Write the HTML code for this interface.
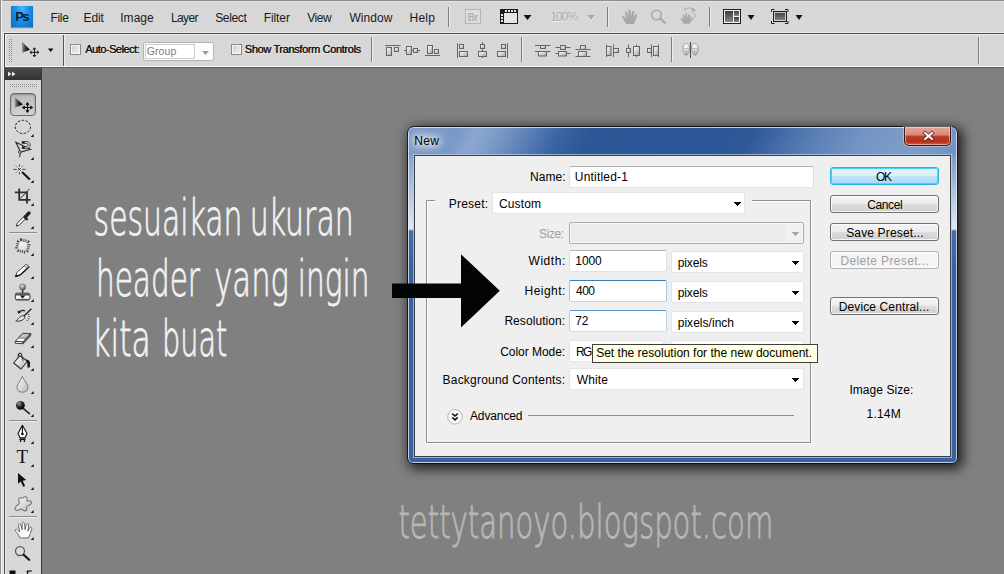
<!DOCTYPE html>
<html lang="id">
<head>
<meta charset="utf-8">
<title>New - Photoshop</title>
<style>
*{box-sizing:border-box;margin:0;padding:0}
html,body{width:1004px;height:574px;overflow:hidden}
body{position:relative;background:#808080;font-family:"Liberation Sans",sans-serif;font-size:12px;color:#000}
.a{position:absolute}
.t{position:absolute;white-space:nowrap;line-height:1;font-family:"Liberation Sans",sans-serif}
svg{position:absolute;left:0;top:0;overflow:visible}
/* app chrome */
#edgeL0{left:0;top:0;width:1px;height:574px;background:#8e8e8e}
#edgeL1{left:1px;top:0;width:1px;height:574px;background:#f4f4f4}
#edgeL2{left:2px;top:33px;width:2px;height:541px;background:#d7d7d7}
#edgeL3{left:3px;top:32px;width:1px;height:542px;background:#efefef}
#menubar{left:2px;top:0;width:1002px;height:33px;background:#d7d7d7;border-top:1px solid #8e8e8e;box-shadow:inset 0 1px 0 #e4e4e4}
#menuHi{left:3px;top:32px;width:1001px;height:1px;background:#efefef}
#optbar{left:4px;top:33px;width:1000px;height:35px;background:#d7d7d7;border-top:1px solid #454545;border-left:1px solid #454545;border-bottom:1px solid #5c5c5c;box-shadow:inset 1px 1px 0 #f2f2f2,inset 0 -1px 0 #f6f6f6}
.vsep{position:absolute;width:2px;border-left:1px solid #7e7e7e;border-right:1px solid #ececec}
.cb{position:absolute;width:11px;height:11px;border:1px solid #8a8a8a;background:linear-gradient(135deg,#cfcfcf 0%,#f4f4f4 100%);box-shadow:inset 0 0 0 1px #f6f6f6}
#grp{left:143px;top:42px;width:71px;height:19px;background:#fcfcfc;border:1px solid #b2b2b2;border-radius:2.5px}
#grpIn{left:145px;top:44px;width:50px;height:15px;border:1px solid #cdcdcd;background:#fff}
#ps{left:11px;top:6px;width:22px;height:21px;background:radial-gradient(ellipse at 50% 10%,#4fb4ff 0%,#1b8fea 45%,#0a6cc4 100%);box-shadow:0 1px 1px rgba(0,0,0,.35)}
/* toolbar */
#tbHead{left:5px;top:68px;width:36px;height:12px;background:linear-gradient(#4a4a4a,#333)}
#tb{left:5px;top:80px;width:36px;height:494px;background:#d7d7d7;box-shadow:inset 1px 0 0 #ececec}
#tbR{left:41px;top:68px;width:1px;height:506px;background:#3c3c3c}
#tbL{left:4px;top:68px;width:1px;height:506px;background:#454545}
#toolSel{left:10px;top:93px;width:26px;height:23px;border:1px solid #6a6a6a;border-radius:4px;background:linear-gradient(#bcbcbc,#d2d2d2);box-shadow:inset 0 1px 2px rgba(0,0,0,.25)}
.tsep{position:absolute;left:9px;width:28px;height:2px;border-top:1px solid #8c8c8c;border-bottom:1px solid #ececec}
/* dialog */
#dlg{left:407px;top:126px;width:551px;height:338px;border:1px solid #141414;border-radius:7px 7px 6px 6px;
 background:linear-gradient(180deg,rgba(234,240,248,0) 0,rgba(234,240,248,0) 24px,rgba(234,240,248,.12) 30px,rgba(234,240,248,.92) 102px,#486eaa 104px,#3a62a3 138px,#3a62a3 100%),linear-gradient(90deg,#7b99c6 0%,#7f9dc9 10%,#7c9bc7 15%,#5d81b7 20%,#3a64a3 26%,#2d5898 31%,#2b5596 53%,#31599a 60%,#5a7eb5 71%,#7495c4 80%,#7c9bc8 89%,#6f90c1 100%);
 box-shadow:inset 0 0 0 1px rgba(235,242,252,.75),3px 3px 12px 2px rgba(0,0,0,.74)}
#dlgTitle{left:409px;top:128px;width:547px;height:27px;border-radius:5px 5px 0 0;
 background:linear-gradient(118deg,#7d9bc8 0px,#7b99c6 45px,#8ba7d0 62px,#7c9bc7 80px,#5d81b7 107px,#3a64a3 135px,#2d5898 162px,#2b5596 270px,#31599a 307px,#5a7eb5 361px,#7495c4 406px,#7d9cc9 452px,#6f90c1 505px)}
#client{left:414px;top:155px;width:537px;height:302px;background:#efefef;border:1px solid #3b3f48;box-shadow:0 0 0 1px rgba(190,208,232,.7)}
.inp{position:absolute;background:#fff;border:1px solid #e4e4e4;border-radius:2px}
.tx{border-color:#b4b4b4 #dedede #e2e2e2 #dedede}
.btn{position:absolute;left:830px;width:109px;height:18px;border:1px solid #707070;border-radius:3px;background:linear-gradient(#f4f4f4 0%,#ececec 48%,#dddddd 52%,#cfcfcf 100%);box-shadow:inset 0 0 0 1px rgba(255,255,255,.8)}
.arr{position:absolute;width:7.4px;height:3.7px;background:#000;clip-path:polygon(0 0,100% 0,50% 100%)}
#tip{left:592px;top:344px;width:226px;height:19px;background:#ffffe1;border:1px solid #3f3f3f}
.hw{font-family:"DejaVu Sans Light","DejaVu Sans","Liberation Sans",sans-serif;font-weight:200}
</style>
</head>
<body>
<div class="a" id="menubar"></div>
<div class="a" id="menuHi"></div>
<div class="a" id="optbar"></div>
<div class="a" id="edgeL0"></div><div class="a" id="edgeL1"></div><div class="a" id="edgeL2"></div><div class="a" id="edgeL3"></div>
<div class="a" id="ps"></div>
<div class="vsep" style="left:448px;top:7px;height:20px"></div>
<div class="vsep" style="left:607px;top:7px;height:20px"></div>
<div class="vsep" style="left:709px;top:7px;height:20px"></div>
<div class="vsep" style="left:63px;top:35px;height:31px;border-left-color:#555"></div>
<div class="vsep" style="left:371px;top:37px;height:25px"></div>
<div class="vsep" style="left:521px;top:37px;height:25px"></div>
<div class="vsep" style="left:671px;top:37px;height:25px"></div>
<div class="vsep" style="left:978px;top:37px;height:27px"></div>
<div class="cb" style="left:70px;top:44px"></div>
<div class="cb" style="left:231px;top:44px"></div>
<div class="a" id="grp"></div><div class="a" id="grpIn"></div>
<svg width="1004" height="70" viewBox="0 0 1004 70">
 <defs>
  <linearGradient id="gI" x1="0" y1="0" x2="1" y2="1"><stop offset="0" stop-color="#fbfbfb"/><stop offset=".45" stop-color="#dadada"/><stop offset="1" stop-color="#9a9a9a"/></linearGradient>
  <linearGradient id="gD" x1="0" y1="0" x2="0" y2="1"><stop offset="0" stop-color="#3a3a3a"/><stop offset="1" stop-color="#8a8a8a"/></linearGradient>
 </defs>
 <!-- gripper -->
 <path d="M9.5 39 v23 M11.5 39 v23" stroke="#8a8a8a" stroke-width="1" stroke-dasharray="1 1" fill="none"/>
 <!-- move tool in options bar -->
 <g id="mv">
  <linearGradient id="gMv" x1="0" y1="0" x2="1" y2="0"><stop offset="0" stop-color="#9a9a9a"/><stop offset="0.45" stop-color="#333"/><stop offset="1" stop-color="#000"/></linearGradient>
  <path d="M22 41.8 L22.1 52.8 L30 49.7 Z" fill="url(#gMv)"/>
  <path d="M34.4 47.9 v8.8 M30 52.3 h8.8 M33 49.6 l1.4 -1.8 l1.4 1.8 M33 55 l1.4 1.8 l1.4 -1.8 M31.7 50.9 l-1.8 1.4 l1.8 1.4 M37.1 50.9 l1.8 1.4 l-1.8 1.4" stroke="#111" stroke-width="1" fill="none"/>
 </g>
 <path d="M47.9 48.6 h5.6 l-2.8 3.4 z" fill="#111"/>
 <!-- group dropdown arrow -->
 <path d="M202.1 51.1 h6.9 l-3.45 3.8 z" fill="#9c9c9c"/>
 <!-- Br box -->
 <rect x="465.5" y="9.5" width="15" height="14" fill="#dedede" stroke="#b4b4b4"/>
 <!-- film icon -->
 <g>
  <rect x="500" y="9" width="18" height="15" fill="#e6e6e6"/>
  <rect x="500" y="9" width="18" height="4" fill="#1a1a1a"/>
  <rect x="500" y="9" width="4" height="15" fill="#1a1a1a"/>
  <rect x="500.5" y="9.5" width="17" height="14" fill="none" stroke="#1a1a1a"/>
  <g fill="#e6e6e6"><rect x="505" y="10" width="2" height="2"/><rect x="508" y="10" width="2" height="2"/><rect x="511" y="10" width="2" height="2"/><rect x="514" y="10" width="2" height="2"/><rect x="501" y="14" width="2" height="2"/><rect x="501" y="17" width="2" height="2"/><rect x="501" y="20" width="2" height="2"/></g>
 </g>
 <path d="M523.5 15 h8 l-4 5 z" fill="#111"/>
 <path d="M587 16 h8 l-4 5 z" fill="#f2f2f2"/>
 <path d="M587 15 h8 l-4 5 z" fill="#aaa"/>
 <!-- hand (disabled) -->
 <g fill="#a9a9a9" stroke="none">
  <path d="M626 24 c-1 -2.5 -2.6 -4.6 -3.8 -6.3 c-.7 -1.2 .8 -2.2 1.8 -1.2 l2 2.2 l-.9 -6.2 c-.2 -1.5 1.7 -1.8 2.1 -.4 l1 4.4 l.2 -6 c.1 -1.5 2.2 -1.5 2.3 0 l.2 6 l1.3 -5 c.4 -1.4 2.3 -1 2.1 .5 l-.7 5.6 l1.6 -3.2 c.7 -1.2 2.4 -.4 1.9 1 c-1 3 -1.6 6 -3.1 8.6 z"/>
 </g>
 <!-- zoom (disabled) -->
 <g fill="none" stroke="#a9a9a9"><circle cx="656.5" cy="15" r="4.8" stroke-width="1.6"/><path d="M660.2 18.6 l4.6 4" stroke-width="2.4" stroke-linecap="round"/></g>
 <!-- rotate hand (disabled) -->
 <g fill="#a9a9a9">
  <path d="M683.6 23.7 c-.8 -1.8 -2 -3.2 -3 -4.5 c-.6 -.9 .6 -1.7 1.4 -.9 l1.5 1.6 l-.7 -4.5 c-.2 -1.2 1.3 -1.4 1.6 -.3 l.8 3.2 l.1 -4.3 c.1 -1.1 1.7 -1.1 1.8 0 l.2 4.3 l.9 -3.6 c.3 -1.1 1.8 -.7 1.6 .4 l-.5 4 l1.2 -2.2 c.5 -.9 1.8 -.3 1.5 .7 c-.7 2.2 -1.2 4.2 -2.3 6.1 z"/>
  <path d="M684 10.4 c1.8 -2.4 5.6 -3.2 9.2 -1.4" fill="none" stroke="#a9a9a9" stroke-width="1.1"/>
  <path d="M692 7.4 l4.2 3.2 l-3.8 .7 z"/>
  <path d="M691.2 10.9 l4.9 4.8 l-5.6 5.8" fill="none" stroke="#a9a9a9" stroke-width="1"/>
 </g>
 <!-- arrange documents -->
 <g>
  <rect x="723.5" y="9.5" width="17" height="14" fill="#f4f4f4" stroke="#1c1c1c"/>
  <rect x="725" y="11" width="8" height="11" fill="url(#gD)"/>
  <rect x="734" y="11" width="5" height="5" fill="url(#gD)"/>
  <rect x="734" y="17" width="5" height="5" fill="url(#gD)"/>
 </g>
 <path d="M747.5 15 h7 l-3.5 5 z" fill="#111"/>
 <!-- screen mode -->
 <g>
  <path d="M771.5 12 v-2.5 h3 M785 9.5 h3 v2.5 M771.5 21 v2.5 h3 M785 23.5 h3 v-2.5" fill="none" stroke="#1c1c1c"/>
  <rect x="773.5" y="11.5" width="13" height="10" fill="url(#gD)" stroke="#1c1c1c"/>
  <rect x="774.5" y="12.5" width="11" height="8" fill="none" stroke="#e8e8e8" stroke-width=".8"/>
 </g>
 <path d="M795.5 15 h7 l-3.5 5 z" fill="#111"/>
 <!-- align icons -->
 <g fill="url(#gI)" stroke="#666" stroke-width="1">
  <path d="M385 45.5 h15.5" />
  <rect x="386.5" y="47.5" width="5" height="8"/><rect x="394.5" y="47.5" width="4" height="4"/>
  <path d="M404 50.5 h16"/>
  <rect x="406.5" y="46.5" width="5" height="8"/><rect x="413.5" y="48.5" width="4" height="4"/>
  <path d="M425 55.5 h15"/>
  <rect x="427.5" y="45.5" width="5" height="8"/><rect x="434.5" y="49.5" width="4" height="4"/>
  <path d="M457.5 43 v15"/>
  <rect x="459.5" y="44.5" width="4" height="4"/><rect x="459.5" y="51.5" width="8" height="5"/>
  <path d="M482.5 42 v16"/>
  <rect x="480.5" y="44.5" width="4" height="4"/><rect x="478.5" y="51.5" width="8" height="5"/>
  <path d="M507.5 43 v15"/>
  <rect x="501.5" y="44.5" width="4" height="4"/><rect x="497.5" y="51.5" width="8" height="5"/>
  <!-- distribute -->
  <path d="M535 45.5 h15.5 M535 51.5 h15.5"/>
  <rect x="540.5" y="45.5" width="5" height="3"/><rect x="538.5" y="51.5" width="8" height="4.5"/>
  <path d="M555.5 47.5 h15 M555.5 53.5 h15"/>
  <rect x="560.5" y="45.5" width="5" height="4"/><rect x="558.5" y="51.5" width="8" height="4.5"/>
  <path d="M575.5 49.5 h15 M575.5 56.5 h15"/>
  <rect x="580.5" y="45.5" width="5" height="4"/><rect x="578.5" y="51.5" width="8" height="5"/>
  <path d="M606.5 44.5 v12.5 M613.5 44.5 v12.5"/>
  <rect x="606.5" y="46.5" width="4.5" height="9"/><rect x="613.5" y="48.5" width="5" height="4"/>
  <path d="M628.5 44.5 v12.5 M636.5 44.5 v12.5"/>
  <rect x="626.5" y="48.5" width="4" height="4"/><rect x="633.5" y="46.5" width="6" height="9"/>
  <path d="M651.5 44.5 v12.5 M658.5 44.5 v12.5"/>
  <rect x="647.5" y="48.5" width="4" height="4"/><rect x="653.5" y="46.5" width="5" height="9"/>
 </g>
 <!-- auto-align faces -->
 <g>
  <radialGradient id="gF" cx=".45" cy=".25" r=".8"><stop offset="0" stop-color="#fdfdfd"/><stop offset=".55" stop-color="#d8d8d8"/><stop offset="1" stop-color="#8e8e8e"/></radialGradient>
  <path d="M686.4 43.4 c2.2 0 3.4 1.7 3.3 4.4 c-.1 2.8 -1.2 7.4 -3.5 7.4 c-2.2 0 -3.3 -4.4 -3.3 -7.2 c0 -2.8 1.3 -4.6 3.5 -4.6 z" fill="url(#gF)" stroke="#9a9a9a" stroke-width=".7"/>
  <path d="M694.8 43.4 c2.2 0 3.6 1.8 3.6 4.6 c0 2.8 -1.2 7.2 -3.4 7.2 c-2.2 0 -3.4 -4.6 -3.5 -7.4 c-.1 -2.7 1.1 -4.4 3.3 -4.4 z" fill="url(#gF)" stroke="#9a9a9a" stroke-width=".7"/>
  <path d="M684 48.5 h5 M692.3 48.5 h5" stroke="#b0b0b0" stroke-width=".8"/>
  <rect x="686" y="50.6" width="1" height="1.2" fill="#777"/><rect x="694.2" y="50.6" width="1" height="1.2" fill="#777"/>
  <path d="M690.5 42 v16" stroke="#4c4c4c" stroke-width="1"/>
 </g>
</svg>
<div class="a" id="tbHead"></div>
<div class="a" id="tb"></div>
<div class="a" id="tbL"></div><div class="a" id="tbR"></div>
<div class="a" id="toolSel"></div>
<div class="tsep" style="top:232px"></div>
<div class="tsep" style="top:420px"></div>
<div class="tsep" style="top:516px"></div>
<svg width="46" height="574" viewBox="0 0 46 574">
 <defs>
  <linearGradient id="gW" x1="0" y1="0" x2="1" y2="1"><stop offset="0" stop-color="#ffffff"/><stop offset="1" stop-color="#b8b8b8"/></linearGradient>
  <linearGradient id="gW2" x1="0" y1="0" x2="1" y2="1"><stop offset="0" stop-color="#ffffff"/><stop offset="1" stop-color="#d4d4d4"/></linearGradient>
  <radialGradient id="gBall" cx=".35" cy=".3" r=".8"><stop offset="0" stop-color="#9a9a9a"/><stop offset=".5" stop-color="#222"/><stop offset="1" stop-color="#000"/></radialGradient>
  <linearGradient id="gMv2" x1="0" y1="0" x2="1" y2="0"><stop offset="0" stop-color="#9a9a9a"/><stop offset="0.5" stop-color="#222"/><stop offset="1" stop-color="#000"/></linearGradient>
 </defs>
 <!-- header arrows -->
 <path d="M8 71.5 l3.5 2.5 l-3.5 2.5 z M12 71.5 l3.5 2.5 l-3.5 2.5 z" fill="#e8e8e8"/>
 <!-- gripper dots -->
 <g fill="#8c8c8c" id="tg"></g>
 <path d="M10 84.5 h27 M10 86.5 h27" stroke="#8c8c8c" stroke-width="1" stroke-dasharray="1 1" fill="none"/>
 <!-- corner triangles -->
 <g fill="#111">
  <path d="M33.7 134 v3 h-3 z"/><path d="M33.7 157 v3 h-3 z"/><path d="M33.7 180 v3 h-3 z"/><path d="M33.7 203 v3 h-3 z"/><path d="M33.7 226 v3 h-3 z"/>
  <path d="M33.7 253 v3 h-3 z"/><path d="M33.7 276 v3 h-3 z"/><path d="M33.7 299 v3 h-3 z"/><path d="M33.7 322 v3 h-3 z"/><path d="M33.7 345 v3 h-3 z"/><path d="M33.7 368 v3 h-3 z"/><path d="M33.7 391 v3 h-3 z"/><path d="M33.7 414 v3 h-3 z"/>
  <path d="M33.7 441 v3 h-3 z"/><path d="M33.7 464 v3 h-3 z"/><path d="M33.7 487 v3 h-3 z"/><path d="M33.7 510 v3 h-3 z"/><path d="M33.7 537 v3 h-3 z"/>
 </g>
 <!-- move -->
 <path d="M14.8 97.2 L14.8 107.8 L23 104.4 Z" fill="url(#gMv2)"/>
 <path d="M27.5 103 v9 M23 107.5 h9 M26 104.8 l1.5 -2 l1.5 2 M26 110.2 l1.5 2 l1.5 -2 M24.8 106 l-2 1.5 l2 1.5 M30.2 106 l2 1.5 l-2 1.5" stroke="#111" stroke-width="1.1" fill="none"/>
 <!-- elliptical marquee -->
 <ellipse cx="22.9" cy="126.9" rx="7.6" ry="6.6" fill="none" stroke="#1a1a1a" stroke-width=".95" stroke-dasharray="2.5 1.5"/>
 <!-- polygonal/magnetic lasso -->
 <g fill="none" stroke="#2a2a2a" stroke-width="1.1">
  <path d="M15.9 142.3 L30.6 149.3 L20.6 152 Z"/>
  <path d="M22.2 141.6 H26.5 C31.4 141.6 31.4 148.4 26.5 148.4 H22.2 V146.8 H26.2 C28.6 146.8 28.6 143.3 26.2 143.3 H22.2 Z" fill="#ececec" stroke-width=".9"/>
  <path d="M22.2 141.6 h2.4 v1.7 h-2.4 z M22.2 146.8 h2.4 v1.6 h-2.4 z" fill="#1a1a1a" stroke="none"/>
  <circle cx="19.9" cy="152" r="1.4" fill="#d8d8d8" stroke-width=".9"/>
  <path d="M20.4 153.4 l-.9 3.8" stroke-width="1"/>
 </g>
 <!-- magic wand -->
 <g fill="none">
  <path d="M19.4 164.2 v10.2 M13.2 169.4 h12.4" stroke="#444" stroke-width=".9"/>
  <path d="M15.4 165.4 l8 8 M23.4 165.4 l-8 8" stroke="#777" stroke-width=".8"/>
  <circle cx="19.4" cy="169.4" r="2.6" fill="#f0f0f0" opacity=".85"/>
  <path d="M18.2 168.2 l2.4 2.4 M20.6 168.2 l-2.4 2.4" stroke="#111" stroke-width="1"/>
  <path d="M22.6 172.6 L29.3 178.9" stroke="#111" stroke-width="2.1" stroke-linecap="round"/>
 </g>
 <!-- crop -->
 <g stroke="#2e2e2e" stroke-width="1.8" fill="none">
  <path d="M14.8 192.3 H27 V203.6 M19.2 188.5 V199.8 H30.6"/>
  <path d="M29.4 189 L20.4 198.4" stroke-width="1"/>
 </g>
 <!-- eyedropper -->
 <g>
  <path d="M16.2 226.2 l1 -3 l8 -8 l2 2 l-8 8 z" fill="#fafafa" stroke="#333" stroke-width="1"/>
  <path d="M24 216.5 l3.5 3.5" stroke="#222" stroke-width="2.4"/>
  <path d="M26 216.2 l3 -3.2" stroke="#222" stroke-width="3.4" stroke-linecap="round"/>
 </g>
 <!-- patch -->
 <g transform="rotate(14 22.9 246)">
  <rect x="18" y="241.1" width="9.8" height="9.8" rx="2" fill="none" stroke="#262626" stroke-width="4.2" stroke-dasharray=".8 1.3"/>
  <rect x="18.3" y="241.4" width="9.2" height="9.2" rx="2.4" fill="url(#gW2)" stroke="#777" stroke-width=".5"/>
 </g>
 <!-- pencil -->
 <g>
  <path d="M15.4 276.5 l1.5 -4 l9.3 -8.4 l3 2.7 l-9.4 8.4 z" fill="#fdfdfd" stroke="#3a3a3a" stroke-width=".9" stroke-linejoin="round"/>
  <path d="M15.4 276.5 l4.4 -1.3 l9.4 -8.4" fill="none" stroke="#111" stroke-width="1.4" stroke-linejoin="round"/>
  <path d="M15.4 276.5 l.8 -2.2 l1.5 1.5 z" fill="#111"/>
  <path d="M24.3 265.9 l3 2.7" stroke="#666" stroke-width="1"/>
  <path d="M25.4 264.9 l3 2.7" stroke="#999" stroke-width=".8"/>
 </g>
 <!-- stamp -->
 <g>
  <radialGradient id="gKnob" cx=".4" cy=".3" r=".75"><stop offset="0" stop-color="#e2e2e2"/><stop offset=".6" stop-color="#8a8a8a"/><stop offset="1" stop-color="#3e3e3e"/></radialGradient>
  <circle cx="22.6" cy="287" r="3.1" fill="url(#gKnob)" stroke="#555" stroke-width=".5"/>
  <rect x="21.9" y="290" width="1.5" height="3.5" fill="#333"/>
  <rect x="15.3" y="293.2" width="14.6" height="6.8" rx="1.8" fill="#fbfbfb" stroke="#333" stroke-width="1"/>
  <path d="M16 293.8 h13.2 v1.7 h-13.2 z" fill="#555"/>
  <path d="M19.8 295.4 h5.6 l-2.8 3 z" fill="#111"/>
  <path d="M16.3 299.3 h12.6" stroke="#444" stroke-width=".9"/>
 </g>
 <!-- history brush -->
 <g fill="none">
  <path d="M31.4 308.8 L23.5 316.5" stroke="#222" stroke-width="1.3"/>
  <path d="M24 316 c-1.5 -1 -4.5 1 -6 3 c-1 1.2 -1.5 1.6 -2.2 2 c2.5 .6 6 -.2 7.6 -1.6 c1.3 -1.2 1.6 -2.5 .6 -3.4 z" fill="#e8e8e8" stroke="#333" stroke-width="1"/>
  <path d="M18.5 313 c1.5 -2.6 4.5 -3.2 6.5 -2" stroke="#222" stroke-width="1.2"/>
  <path d="M17.6 310.2 l.4 3.6 l3.2 -1.5 z" fill="#222"/>
  <path d="M28.5 314 c1.5 2.5 .8 5.5 -2.5 7.5" stroke="#222" stroke-width="1.1" stroke-dasharray="1 1.3"/>
 </g>
 <!-- eraser -->
 <g stroke="#333" stroke-width=".9" stroke-linejoin="round">
  <path d="M22.5 333.4 L30.7 333.5 L23.2 341.8 L15.4 341.4 Z" fill="#c4c4c4"/>
  <path d="M18.7 338 L26.5 338.3 L23.2 341.8 L15.4 341.4 Z" fill="#fff" stroke-width=".6"/>
  <path d="M15.4 341.4 L23.2 341.8 L23.2 343.7 L15.2 343.3 Z" fill="#f2f2f2"/>
  <path d="M23.2 341.8 L30.7 333.5 L30.6 335.7 L23.2 343.7 Z" fill="#8c8c8c"/>
 </g>
 <!-- bucket -->
 <g>
  <path d="M13.6 363 L19.6 355.8 L27.6 361 L21 369 Z" fill="url(#gW)" stroke="#333" stroke-width="1.1" stroke-linejoin="round"/>
  <path d="M18.6 357.6 c-1.4 -4.4 1.8 -5.6 3 -3 l1.3 5.6" fill="none" stroke="#333" stroke-width="1.1"/>
  <path d="M26.6 359.6 c2.6 .6 3.6 2.2 3.4 4.2 l-.2 3.8 h-2.3 l-.1 -4.2 c0 -1.3 -.7 -2.2 -1.9 -2.6 z" fill="#111"/>
  <rect x="22.3" y="359.8" width="1.4" height="1.6" fill="#f4f4f4" stroke="#666" stroke-width=".5"/>
 </g>
 <!-- blur drop -->
 <path d="M22.4 376.3 C23.5 380 28.2 384 28 387.6 C27.8 390.6 25.5 392.2 22.5 392.2 C19.5 392.2 17.2 390.6 17 387.6 C16.8 384 21.3 380 22.4 376.3 Z" fill="url(#gW)" stroke="#777" stroke-width="1"/>
 <!-- dodge -->
 <g>
  <path d="M23.5 408.6 L29.4 413.6" stroke="#222" stroke-width="1.5" stroke-linecap="round"/>
  <circle cx="20.4" cy="405.3" r="4.4" fill="url(#gBall)"/>
 </g>
 <!-- pen -->
 <g stroke="#111" stroke-width="1.1" stroke-linejoin="round">
  <path d="M22.4 425.3 L27 433.5 L25 437.8 H20 L18 433.5 Z" fill="#fff"/>
  <path d="M22.4 426 V434" fill="none"/>
  <circle cx="22.4" cy="434" r=".8" fill="#111"/>
  <path d="M19.5 439.2 h6" stroke-width="1.6"/>
  <path d="M20.6 440 v2 M24.4 440 v2" stroke-width="1.3"/>
 </g>
 <!-- path selection arrow -->
 <path d="M18 473 V483.8 L20.8 481.6 L23.2 486.8 L25.1 486 L22.7 480.7 L26.2 480.1 Z" fill="#111"/>
 <!-- custom shape blob -->
 <path d="M23 498 c1.5 -2 4.5 -1.5 4 1.2 c-.3 1.4 -.2 2 1 1.8 c3.5 -.8 4.6 1.6 2.6 3.2 c-1.6 1.2 -3.6 1.4 -4 3 c-.3 1.5 1 3 -.8 3.6 c-2 .6 -2.8 -1.2 -4.2 -1.6 c-1.8 -.4 -3 1.6 -5 1.2 c-2.2 -.6 -1.8 -2.8 -.2 -4.2 c1.8 -1.6 3.4 -2.6 3 -4.4 c-.4 -1.6 -1.4 -2.4 -.4 -3.4 c1.2 -1.2 3 -.2 4 -.4 z" fill="url(#gW)" stroke="#777" stroke-width="1.1"/>
 <!-- hand -->
 <path d="M20 538 c-1 -2.8 -3 -5 -4.6 -7 c-.9 -1.3 .8 -2.4 1.9 -1.3 l2.4 2.4 l-1.2 -6.8 c-.2 -1.6 1.9 -2 2.4 -.4 l1.2 4.8 l.1 -6.2 c.1 -1.6 2.4 -1.6 2.5 0 l.3 6.2 l1.4 -5.2 c.5 -1.5 2.5 -1.1 2.3 .5 l-.8 6.2 l1.8 -3.4 c.8 -1.3 2.6 -.5 2.1 1 c-1.1 3.3 -1.8 6.4 -3.4 9.2 z" fill="#fcfcfc" stroke="#6a6a6a" stroke-width="1"/>
 <!-- zoom -->
 <g fill="none"><circle cx="20" cy="551.1" r="4.5" fill="#dcdcdc" stroke="#555" stroke-width="1.3"/><path d="M23.6 554.8 L29.2 559.8" stroke="#111" stroke-width="2.2" stroke-linecap="round"/></g>
 <!-- colour swatches at bottom -->
 <rect x="9.5" y="570.5" width="6" height="5" fill="#111"/>
 <path d="M27.5 574 c-.5 -2.5 1.5 -3.5 4.5 -3" fill="none" stroke="#222" stroke-width="1.2"/>
 <path d="M26 571.5 l2 -1.5 l.5 2.5 z" fill="#222"/>
</svg>
<svg width="1004" height="574" viewBox="0 0 1004 574" class="hw">
<text x="93.6" y="234.6" font-size="49" fill="#f1f1f1" stroke="#f1f1f1" stroke-width="0.9" textLength="148.8" lengthAdjust="spacingAndGlyphs">sesuaikan</text>
<text x="249.7" y="234.6" font-size="49" fill="#f1f1f1" stroke="#f1f1f1" stroke-width="0.9" textLength="104.1" lengthAdjust="spacingAndGlyphs">ukuran</text>
<text x="96.0" y="295.5" font-size="49" fill="#f1f1f1" stroke="#f1f1f1" stroke-width="0.9" textLength="104.0" lengthAdjust="spacingAndGlyphs">header</text>
<text x="214.2" y="295.5" font-size="49" fill="#f1f1f1" stroke="#f1f1f1" stroke-width="0.9" textLength="74.8" lengthAdjust="spacingAndGlyphs">yang</text>
<text x="297.8" y="295.5" font-size="49" fill="#f1f1f1" stroke="#f1f1f1" stroke-width="0.9" textLength="71.7" lengthAdjust="spacingAndGlyphs">ingin</text>
<text x="92.3" y="355.6" font-size="49" fill="#f1f1f1" stroke="#f1f1f1" stroke-width="0.9" textLength="58.5" lengthAdjust="spacingAndGlyphs">kita</text>
<text x="162.1" y="355.6" font-size="49" fill="#f1f1f1" stroke="#f1f1f1" stroke-width="0.9" textLength="65.2" lengthAdjust="spacingAndGlyphs">buat</text>
<text x="398.4" y="537.8" font-size="46" fill="#b7b7b7" stroke="#b7b7b7" stroke-width="0.9" textLength="374.9" lengthAdjust="spacingAndGlyphs">tettytanoyo.blogspot.com</text>
</svg>
<div class="a" id="dlg"></div>
<div class="a" id="dlgTitle"></div>
<div class="a" id="client"></div>
<!-- close button -->
<div class="a" id="closeBtn" style="left:904px;top:127px;width:47px;height:19px;border:1px solid #3b1510;border-top:none;border-radius:0 0 5px 5px;background:linear-gradient(#e3a89d 0%,#d4887a 45%,#c23f2a 50%,#b82e1a 80%,#d05a3a 100%);box-shadow:inset 0 0 0 1px rgba(255,220,210,.55),0 0 0 1px rgba(255,255,255,.35)"></div>
<svg width="1004" height="574" viewBox="0 0 1004 574" style="pointer-events:none">
 <path d="M925 133 L932 139 M932 133 L925 139" stroke="#4a2018" stroke-width="3.4" stroke-linecap="square"/>
 <path d="M925 133 L932 139 M932 133 L925 139" stroke="#fff" stroke-width="2" stroke-linecap="square"/>
 <!-- group box -->
 <g fill="none" stroke="#fff" stroke-width="1"><path d="M435 201.5 H427.5 V443.5 H811.5 V201.5"/><path d="M752 201.5 H811"/></g>
 <g fill="none" stroke="#8f8f8f" stroke-width="1"><path d="M435 200.5 H426.5 V442.5 H810.5 V200.5 H752"/></g>
 <!-- advanced line -->
 <path d="M528 415.5 H794" stroke="#8f8f8f" stroke-width="1"/>
 <!-- advanced button -->
 <circle cx="455" cy="416.8" r="7.3" fill="#f7f7f7" stroke="#b9b9b9" stroke-width="1"/>
 <path d="M452.3 413.6 l2.7 2.5 l2.7 -2.5 M452.3 417.4 l2.7 2.5 l2.7 -2.5" fill="none" stroke="#111" stroke-width="1.5"/>
 <!-- big arrow -->
 <path d="M392 283.5 H461 V254.3 L499.8 290.8 L461 327.5 V298 H392 Z" fill="#030405"/>
</svg>
<!-- inputs -->
<div class="inp tx" style="left:569px;top:166px;width:245px;height:22px"></div>
<div class="inp" style="left:492px;top:192px;width:253px;height:22px"></div>
<div class="a" style="left:569px;top:222px;width:235px;height:22px;border:1px solid #adadad;border-radius:2px;background:#ebebeb;box-shadow:inset 0 0 0 1px #f6f6f6"></div>
<div class="a" style="left:785px;top:224px;width:17px;height:18px;background:#f0f0f0"></div>
<div class="inp tx" style="left:569px;top:250px;width:98px;height:22px"></div>
<div class="inp" style="left:671px;top:251px;width:133px;height:22px"></div>
<div class="inp" style="left:569px;top:280px;width:98px;height:22px;border-color:#3d7bad #a4c5e4 #b7d9ed #a4c5e4;box-shadow:none"></div>
<div class="inp" style="left:671px;top:281px;width:133px;height:22px"></div>
<div class="inp" style="left:569px;top:310px;width:98px;height:22px;border-color:#5c97c5 #b8d1e8 #c7dff0 #b8d1e8;box-shadow:none"></div>
<div class="inp" style="left:671px;top:311px;width:133px;height:22px"></div>
<div class="inp" style="left:569px;top:340px;width:94px;height:22px"></div>
<div class="inp" style="left:671px;top:340px;width:133px;height:22px"></div>
<div class="inp" style="left:569px;top:368px;width:235px;height:22px"></div>
<svg width="1004" height="574" viewBox="0 0 1004 574" shape-rendering="crispEdges">
<path d="M734 202 h7 v1 h-1 v1 h-1 v1 h-1 v1 h-1 v-1 h-1 v-1 h-1 v-1 h-1 z" fill="#000"/>
<path d="M792 232 h7 v1 h-1 v1 h-1 v1 h-1 v1 h-1 v-1 h-1 v-1 h-1 v-1 h-1 z" fill="#a6a6a6"/>
<path d="M792 261 h7 v1 h-1 v1 h-1 v1 h-1 v1 h-1 v-1 h-1 v-1 h-1 v-1 h-1 z" fill="#000"/>
<path d="M792 291 h7 v1 h-1 v1 h-1 v1 h-1 v1 h-1 v-1 h-1 v-1 h-1 v-1 h-1 z" fill="#000"/>
<path d="M792 321 h7 v1 h-1 v1 h-1 v1 h-1 v1 h-1 v-1 h-1 v-1 h-1 v-1 h-1 z" fill="#000"/>
<path d="M792 378 h7 v1 h-1 v1 h-1 v1 h-1 v1 h-1 v-1 h-1 v-1 h-1 v-1 h-1 z" fill="#000"/>
</svg>
<!-- buttons -->
<div class="btn" style="top:167px;border-color:#2fb5e8;background:linear-gradient(#eaf6fd 0%,#d9f0fc 48%,#bee6fb 52%,#a7d9f5 100%);box-shadow:inset 0 0 0 1px #48d4f8"></div>
<div class="btn" style="top:195px"></div>
<div class="btn" style="top:223px"></div>
<div class="btn" style="top:251px;border-color:#adb2b5;background:#f4f4f4"></div>
<div class="btn" style="top:297px"></div>
<div class="a" id="tip"></div>
<span class="t" style="left:50.50px;top:11.8px;font-size:12px;color:#1a1a1a;letter-spacing:-0.34px;">File</span>
<span class="t" style="left:83.60px;top:11.8px;font-size:12px;color:#1a1a1a;letter-spacing:-0.16px;">Edit</span>
<span class="t" style="left:120.16px;top:11.8px;font-size:12px;color:#1a1a1a;letter-spacing:0.07px;">Image</span>
<span class="t" style="left:171.06px;top:11.8px;font-size:12px;color:#1a1a1a;letter-spacing:-0.66px;">Layer</span>
<span class="t" style="left:215.16px;top:11.8px;font-size:12px;color:#1a1a1a;letter-spacing:-0.34px;">Select</span>
<span class="t" style="left:263.72px;top:11.8px;font-size:12px;color:#1a1a1a;letter-spacing:-0.09px;">Filter</span>
<span class="t" style="left:307.18px;top:11.8px;font-size:12px;color:#1a1a1a;letter-spacing:-0.47px;">View</span>
<span class="t" style="left:349.40px;top:11.8px;font-size:12px;color:#1a1a1a;letter-spacing:0.05px;">Window</span>
<span class="t" style="left:409.60px;top:11.8px;font-size:12px;color:#1a1a1a;letter-spacing:0.21px;">Help</span>
<span class="t" style="left:15.21px;top:10.0px;font-size:13px;color:#10202c;letter-spacing:-1.5px;font-weight:bold">Ps</span>
<span class="t" style="left:467.80px;top:13.0px;font-size:10px;color:#b2b2b2;letter-spacing:-0.62px;font-weight:bold">Br</span>
<span class="t" style="left:550.16px;top:11.3px;font-size:12px;color:#a9a9a9;letter-spacing:-0.98px;text-shadow:0 1px 0 #f4f4f4">100%</span>
<span class="t" style="left:85.15px;top:43.7px;font-size:11px;color:#111;letter-spacing:-0.5px;text-shadow:.3px 0 0 #333,0 1px 0 rgba(255,255,255,.45)">Auto-Select:</span>
<span class="t" style="left:146.66px;top:45.6px;font-size:10.5px;color:#7c7c7c;letter-spacing:0.12px;">Group</span>
<span class="t" style="left:244.79px;top:43.7px;font-size:11px;color:#111;letter-spacing:-0.36px;text-shadow:.3px 0 0 #333,0 1px 0 rgba(255,255,255,.45)">Show Transform Controls</span>
<span class="t" style="left:414.26px;top:135.3px;font-size:12px;color:#000;letter-spacing:0.32px;text-shadow:0 0 5px #fff,0 0 8px #fff,0 0 11px #fff,0 0 14px rgba(255,255,255,.8)">New</span>
<span class="t" style="left:530.06px;top:170.8px;font-size:12px;color:#000;letter-spacing:0.02px;">Name:</span>
<span class="t" style="left:574.84px;top:170.8px;font-size:12px;color:#000;letter-spacing:0.19px;">Untitled-1</span>
<span class="t" style="left:448.84px;top:197.8px;font-size:12px;color:#000;letter-spacing:0.2px;">Preset:</span>
<span class="t" style="left:498.94px;top:197.8px;font-size:12px;color:#000;letter-spacing:0.13px;">Custom</span>
<span class="t" style="left:539.06px;top:227.8px;font-size:12px;color:#a0a0a0;letter-spacing:-0.4px;">Size:</span>
<span class="t" style="left:528.52px;top:254.8px;font-size:12px;color:#000;letter-spacing:0.55px;">Width:</span>
<span class="t" style="left:575.28px;top:254.8px;font-size:12px;color:#000;letter-spacing:-0.06px;">1000</span>
<span class="t" style="left:677.72px;top:256.8px;font-size:12px;color:#000;letter-spacing:-0.12px;">pixels</span>
<span class="t" style="left:524.60px;top:284.8px;font-size:12px;color:#000;letter-spacing:0.44px;">Height:</span>
<span class="t" style="left:576.08px;top:284.8px;font-size:12px;color:#000;letter-spacing:-0.55px;">400</span>
<span class="t" style="left:677.72px;top:286.8px;font-size:12px;color:#000;letter-spacing:-0.12px;">pixels</span>
<span class="t" style="left:504.38px;top:314.8px;font-size:12px;color:#000;letter-spacing:0.07px;">Resolution:</span>
<span class="t" style="left:575.28px;top:314.8px;font-size:12px;color:#000;letter-spacing:-0.28px;">72</span>
<span class="t" style="left:677.72px;top:316.8px;font-size:12px;color:#000;letter-spacing:0.03px;">pixels/inch</span>
<span class="t" style="left:500.18px;top:345.8px;font-size:12px;color:#000;letter-spacing:-0.04px;">Color Mode:</span>
<span class="t" style="left:575.94px;top:345.8px;font-size:12px;color:#000;letter-spacing:-1.5px;">RG</span>
<span class="t" style="left:442.60px;top:373.8px;font-size:12px;color:#000;letter-spacing:0.2px;">Background Contents:</span>
<span class="t" style="left:576.74px;top:373.8px;font-size:12px;color:#000;letter-spacing:0.15px;">White</span>
<span class="t" style="left:469.96px;top:409.8px;font-size:12px;color:#000;letter-spacing:-0.12px;">Advanced</span>
<span class="t" style="left:596.18px;top:346.8px;font-size:12px;color:#000;letter-spacing:0.01px;">Set the resolution for the new document.</span>
<span class="t" style="left:876.06px;top:170.8px;font-size:12px;color:#000;letter-spacing:-1.48px;">OK</span>
<span class="t" style="left:867.18px;top:198.8px;font-size:12px;color:#000;letter-spacing:-0.39px;">Cancel</span>
<span class="t" style="left:846.18px;top:226.8px;font-size:12px;color:#000;letter-spacing:0.15px;">Save Preset...</span>
<span class="t" style="left:840.38px;top:254.8px;font-size:12px;color:#a0a0a0;letter-spacing:0.38px;">Delete Preset...</span>
<span class="t" style="left:838.72px;top:300.8px;font-size:12px;color:#000;letter-spacing:0.12px;">Device Central...</span>
<span class="t" style="left:849.38px;top:383.8px;font-size:12px;color:#000;letter-spacing:0.07px;">Image Size:</span>
<span class="t" style="left:866.60px;top:407.8px;font-size:12px;color:#000;letter-spacing:0.18px;">1.14M</span>
<span class="t" style="left:16.4px;top:447.1px;font-size:19px;font-family:'Liberation Serif',serif;color:#111">T</span>
</body>
</html>
